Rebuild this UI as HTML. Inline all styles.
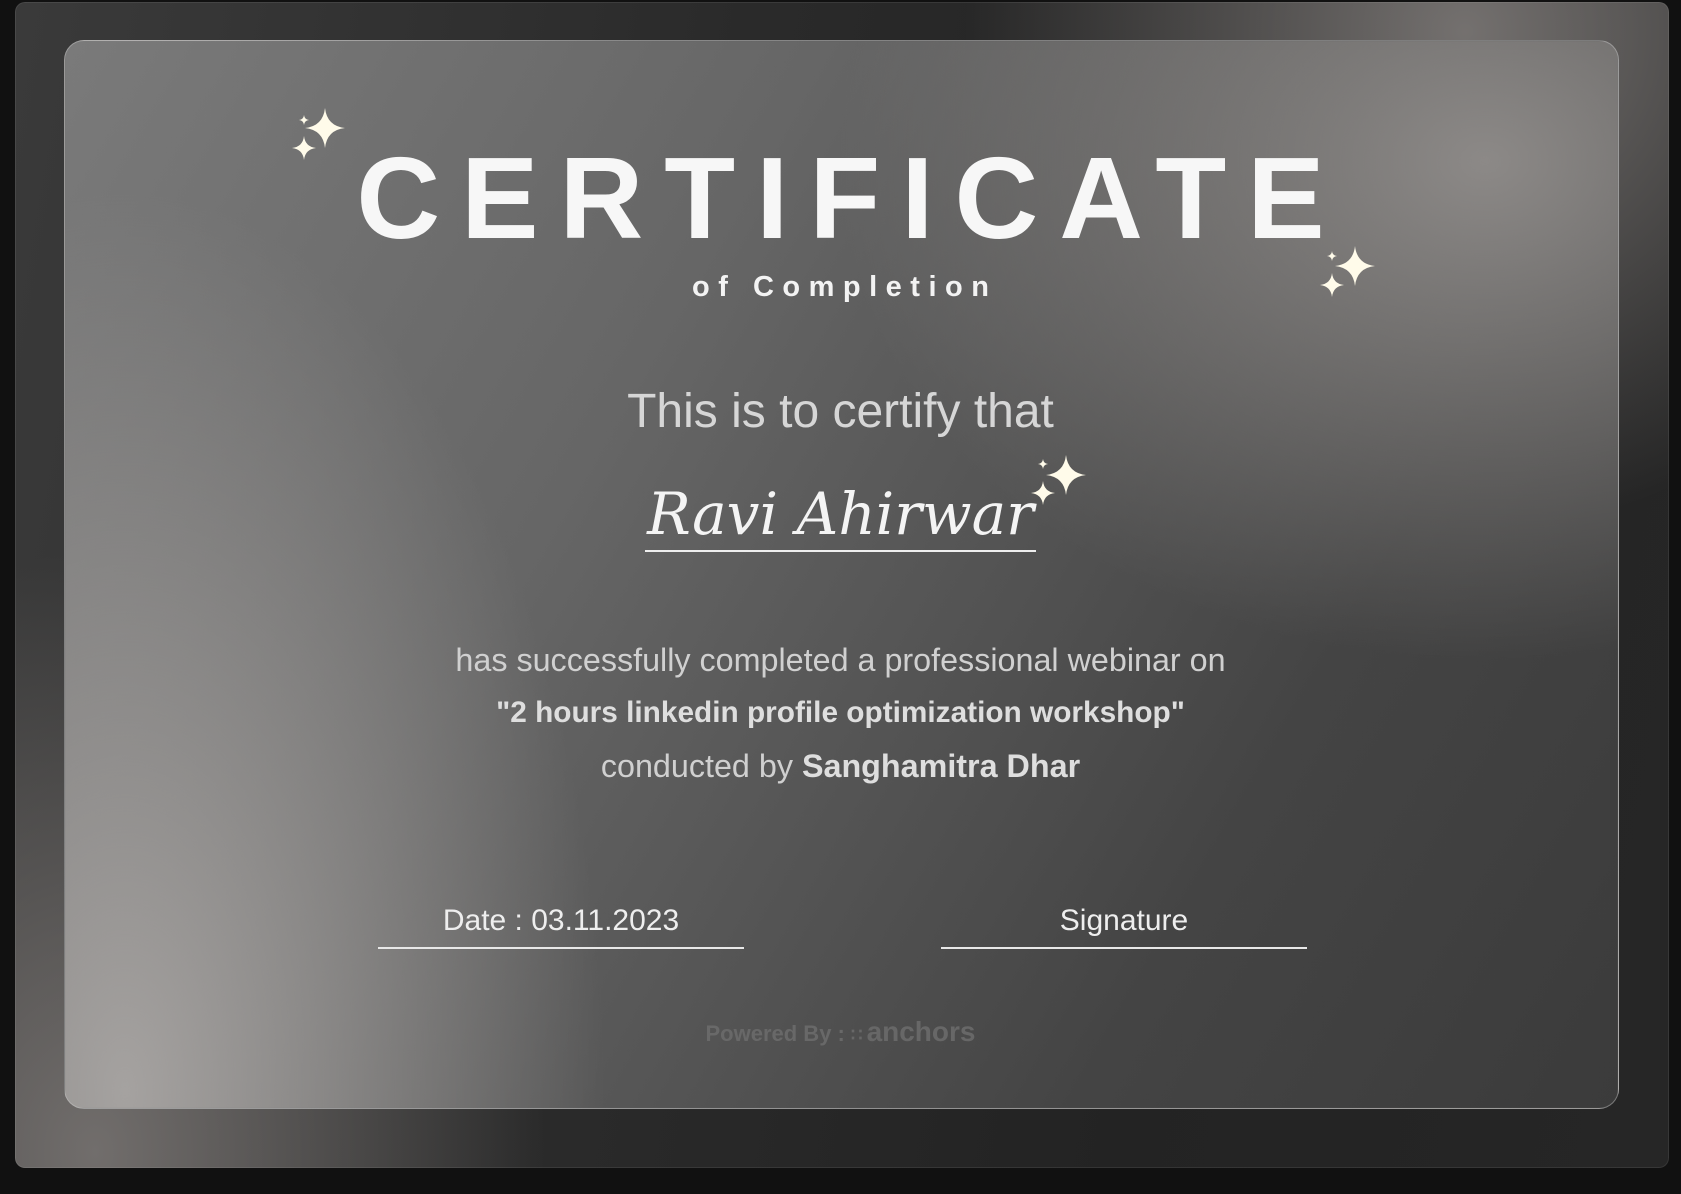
<!DOCTYPE html>
<html><head><meta charset="utf-8"><style>
html,body{margin:0;padding:0;width:1681px;height:1194px;background:#111;overflow:hidden;font-family:"Liberation Sans",sans-serif}
.outer{position:absolute;left:15px;top:2px;width:1654px;height:1166px;border-radius:10px;
background:
radial-gradient(ellipse 500px 500px at 1450px 30px,rgba(130,126,124,.85),rgba(130,126,124,0) 100%),
radial-gradient(ellipse 450px 600px at 80px 1150px,rgba(120,116,114,.9),rgba(120,116,114,0) 100%),
linear-gradient(100deg,#3a3a3a 0%,#2a2a2a 40%,#232323 70%,#262626 100%);
box-shadow:inset 0 0 0 1px rgba(255,255,255,.08)}
.inner{position:absolute;left:64px;top:40px;width:1555px;height:1069px;border-radius:20px;border:1px solid rgba(200,200,200,.45);box-sizing:border-box;overflow:hidden;
background:
radial-gradient(ellipse 650px 500px at 1420px 120px,rgba(140,137,135,1),rgba(140,137,135,0) 100%),
radial-gradient(ellipse 480px 900px at 60px 1050px,rgba(165,162,160,1),rgba(165,162,160,0) 100%),
linear-gradient(120deg,#7a7a7a 0%,#666 35%,#555 55%,#444 75%,#3b3b3b 100%)}
.t{position:absolute;left:0;width:1681px;text-align:center;color:#fff;white-space:nowrap}
.cert{top:133px;font-size:116px;font-weight:bold;letter-spacing:21px;text-indent:21px;color:#f7f7f7;line-height:130px}
.of{top:271px;font-size:29px;font-weight:bold;letter-spacing:8.5px;text-indent:8.5px;color:#f3f3f3}
.this{top:384px;font-size:48px;color:#d6d6d6}
.name{top:480px;font-family:"DejaVu Serif","Liberation Serif",serif;font-style:italic;font-size:58px;color:#f4f4f4}
.name span{border-bottom:2px solid #eee;padding:0 2px 2px}
.body{font-size:31px;color:#d0d0d0}
.b{font-weight:bold;color:#dedede}
.line{position:absolute;height:2px;background:#e8e8e8;top:947px;width:366px}
.lab{position:absolute;top:904px;font-size:30px;color:#eee;text-align:center;width:366px}
.pw{top:1016px;font-size:22px;font-weight:bold;color:rgba(110,110,110,.8)}
</style></head><body>
<div class="outer"></div>
<div class="inner"></div>
<div class="t cert">CERTIFICATE</div>
<div class="t of">of Completion</div>
<div class="t this">This is to certify that</div>
<div class="t name"><span>Ravi Ahirwar</span></div>
<div class="t body" style="top:642px;font-size:32.3px">has successfully completed a professional webinar on</div>
<div class="t body b" style="top:696px;font-size:29.8px">"2 hours linkedin profile optimization workshop"</div>
<div class="t body" style="top:748px;font-size:32.3px">conducted by <span class="b">Sanghamitra Dhar</span></div>
<div class="lab" style="left:378px">Date : 03.11.2023</div>
<div class="line" style="left:378px"></div>
<div class="lab" style="left:941px">Signature</div>
<div class="line" style="left:941px"></div>
<div class="t pw">Powered By : <span style="font-size:18px;letter-spacing:-2px">&#8759;</span> <span style="font-size:28px">anchors</span></div>
<svg style="position:absolute;left:0;top:0" width="1681" height="1194">
<defs><path id="s" d="M0,-10 Q1,-1 10,0 Q1,1 0,10 Q-1,1 -10,0 Q-1,-1 0,-10Z" fill="#fffbea"/></defs>
<use href="#s" transform="translate(325,128) scale(2)"/>
<use href="#s" transform="translate(304,148) scale(1.2)"/>
<use href="#s" transform="translate(304,120) scale(.5)"/>
<use href="#s" transform="translate(1355,266) scale(2)"/>
<use href="#s" transform="translate(1332,285) scale(1.2)"/>
<use href="#s" transform="translate(1332,256) scale(.5)"/>
<use href="#s" transform="translate(1066,475) scale(2)"/>
<use href="#s" transform="translate(1043,493) scale(1.2)"/>
<use href="#s" transform="translate(1043,464) scale(.5)"/>
</svg>
</body></html>
